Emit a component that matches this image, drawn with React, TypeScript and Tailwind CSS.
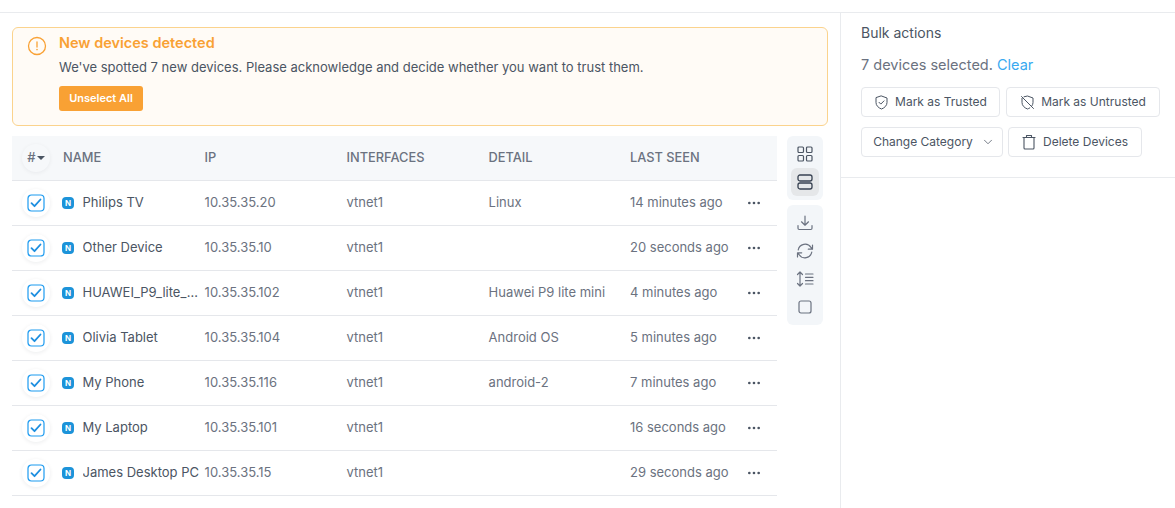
import React from "react";
import { MoreHorizontal, ChevronDown } from "lucide-react";

const rows = [
  ["Philips TV", "10.35.35.20", "vtnet1", "Linux", "14 minutes ago"],
  ["Other Device", "10.35.35.10", "vtnet1", "", "20 seconds ago"],
  ["HUAWEI_P9_lite_mini", "10.35.35.102", "vtnet1", "Huawei P9 lite mini", "4 minutes ago"],
  ["Olivia Tablet", "10.35.35.104", "vtnet1", "Android OS", "5 minutes ago"],
  ["My Phone", "10.35.35.116", "vtnet1", "android-2", "7 minutes ago"],
  ["My Laptop", "10.35.35.101", "vtnet1", "", "16 seconds ago"],
  ["James Desktop PC", "10.35.35.15", "vtnet1", "", "29 seconds ago"],
];

function Row({ r }: { r: string[] }) {
  return (
    <div className="flex h-[45px] items-center border-b border-[#e5e7eb] text-[13px] text-[#6b7280]">
      <div className="flex w-[50px] shrink-0 justify-center pr-[2px]">
        <div className="flex h-[28px] w-[28px] items-center justify-center rounded-full bg-white shadow-[0_1px_4px_rgba(17,24,39,0.08)]">
          <svg width="18" height="18" viewBox="0 0 18 18" fill="none">
            <rect x="1" y="1" width="16" height="16" rx="3.5" stroke="#1d9bf0" strokeWidth="1.2" />
            <path d="M4.5 9.2l3 3 6-6.7" stroke="#1d8fe0" strokeWidth="1.8" strokeLinecap="round" strokeLinejoin="round" />
          </svg>
        </div>
      </div>
      <div className="flex w-[142.6px] shrink-0 items-center">
        <span className="flex h-[12px] w-[12px] shrink-0 items-center justify-center rounded-[4px] bg-[#1c93d9] text-[8px] font-bold leading-none text-white">N</span>
        <span className="ml-[8.5px] min-w-0 flex-1 truncate pr-[5px] text-[#4b5563]">{r[0]}</span>
      </div>
      <div className="w-[142px] shrink-0">{r[1]}</div>
      <div className="w-[142px] shrink-0">{r[2]}</div>
      <div className="w-[141.4px] shrink-0">{r[3]}</div>
      <div className="w-[116px] shrink-0 whitespace-nowrap">{r[4]}</div>
      <MoreHorizontal size={16} className="text-[#4b5563]" />
    </div>
  );
}

function Btn({ children, width }: { children: React.ReactNode; width: string }) {
  return (
    <button className={`flex h-[30px] items-center justify-center rounded-[4px] border border-[#e5e7eb] bg-white text-[12px] text-[#4b5563] ${width}`}>
      {children}
    </button>
  );
}

export default function App() {
  return (
    <div className="h-[508px] w-[1175px] overflow-hidden bg-white pt-[12px] font-['Inter',sans-serif]">
      <div className="flex h-[496px] border-t border-[#e9ebee]">
        <div className="w-[840px] shrink-0 pl-[12px] pt-[14px]">
          <div className="flex h-[99px] w-[816px] rounded-[6px] border border-[#fbd38d] bg-[#fffbf6] pl-[14px] pt-[7px]">
            <svg width="20" height="20" viewBox="0 0 20 20" fill="none" className="mt-[1px] shrink-0">
              <circle cx="10" cy="10" r="8.5" stroke="#f9a134" strokeWidth="1.3" />
              <path d="M10 6v5" stroke="#f9a134" strokeWidth="1.3" strokeLinecap="round" />
              <circle cx="10" cy="13.6" r="0.8" fill="#f9a134" />
            </svg>
            <div className="ml-[12px] flex flex-col items-start">
              <div className="text-[14.5px] font-semibold leading-[16px] text-[#f9a134]">New devices detected</div>
              <div className="mt-[7px] text-[13px] leading-[18px] text-[#4b5563]">We've spotted 7 new devices. Please acknowledge and decide whether you want to trust them.</div>
              <button className="mt-[10px] h-[25px] w-[84px] rounded-[3px] bg-[#f9a134] text-[11px] font-semibold text-white">Unselect All</button>
            </div>
          </div>
          <div className="mt-[10px] flex">
            <div className="w-[765px] shrink-0">
              <div className="flex h-[45px] items-center border-b border-[#e5e7eb] bg-[#f6f8fa] text-[12.8px] font-medium text-[#6b7280]">
                <div className="flex w-[50px] shrink-0 justify-center pr-[2px]">
                  <div className="flex h-[28px] w-[28px] items-center justify-center rounded-full bg-[#f6f8fa] text-[13px] shadow-[0_1px_4px_rgba(17,24,39,0.06)]">
                    <span>#</span>
                    <span className="ml-[1px] h-0 w-0 border-x-[4px] border-t-[4px] border-x-transparent border-t-[#4b5563]" />
                  </div>
                </div>
                <div className="w-[142.6px] shrink-0 pl-[1px]">NAME</div>
                <div className="w-[142px] shrink-0">IP</div>
                <div className="w-[142px] shrink-0">INTERFACES</div>
                <div className="w-[141.4px] shrink-0">DETAIL</div>
                <div>LAST SEEN</div>
              </div>
              {rows.map((r) => (
                <Row key={r[0]} r={r} />
              ))}
            </div>
            <div className="ml-[10px] flex w-[36px] shrink-0 flex-col gap-[5px]">
              <div className="flex h-[64px] flex-col items-center rounded-[6px] bg-[#f3f6f9] pt-[4px]">
                <div className="flex h-[28px] w-[28px] items-center justify-center">
                  <svg width="16" height="16" viewBox="0 0 16 16" fill="none" stroke="#4b5563" strokeWidth="1.2">
                    <rect x="1" y="1" width="5.5" height="5.5" rx="1" />
                    <rect x="9.5" y="1" width="5.5" height="5.5" rx="1" />
                    <rect x="1" y="9.5" width="5.5" height="5.5" rx="1" />
                    <rect x="9.5" y="9.5" width="5.5" height="5.5" rx="1" />
                  </svg>
                </div>
                <div className="flex h-[28px] w-[28px] items-center justify-center rounded-[6px] bg-[#e5e7e9]">
                  <svg width="16" height="16" viewBox="0 0 16 16" fill="none" stroke="#374151" strokeWidth="1.3">
                    <rect x="1" y="1" width="14" height="6" rx="2" />
                    <rect x="1" y="9" width="14" height="6" rx="2" />
                  </svg>
                </div>
              </div>
              <div className="flex h-[120px] flex-col items-center gap-[11px] rounded-[6px] bg-[#f3f6f9] pt-[10px]">
                <svg width="16" height="16" viewBox="0 0 16 16" fill="none" stroke="#6b7280" strokeWidth="1.2" strokeLinecap="round" strokeLinejoin="round">
                  <path d="M8 1v9M4.5 6.8L8 10.2l3.5-3.4M1 10.5v2.8c0 .6.5 1.2 1.2 1.2h11.6c.7 0 1.2-.6 1.2-1.2v-2.8" />
                </svg>
                <svg width="18" height="18" viewBox="0 0 18 18" fill="none" stroke="#6b7280" strokeWidth="1.2" strokeLinecap="round" strokeLinejoin="round">
                  <path d="M2.2 8A7 7 0 0 1 15 5.5l1.3 1.6M16.5 3v4.2h-4.2M15.8 10A7 7 0 0 1 3 12.5l-1.3-1.6M1.5 15v-4.2h4.2" />
                </svg>
                <svg width="18" height="16" viewBox="0 0 18 16" fill="none" stroke="#6b7280" strokeWidth="1.2" strokeLinecap="round" strokeLinejoin="round">
                  <path d="M4 1v14M1.5 3.5L4 1l2.5 2.5M1.5 12.5L4 15l2.5-2.5M9.5 3h7.5M9.5 6.3h7.5M9.5 9.7h7.5M9.5 13h7.5" />
                </svg>
                <svg width="14" height="14" viewBox="0 0 14 14" fill="none" stroke="#6b7280" strokeWidth="1.2" className="mt-[2px]">
                  <rect x="1" y="1" width="12" height="12" rx="2" />
                </svg>
              </div>
            </div>
          </div>
        </div>
        <div className="flex-1 border-l border-[#e9ebee]">
          <div className="h-[165px] border-b border-[#e9ebee] pl-[20px] pt-[11px]">
            <div className="text-[14px] leading-[18px] text-[#4b5563]">Bulk actions</div>
            <div className="mt-[14px] text-[14.5px] leading-[18px] text-[#6b7280]">
              7 devices selected. <span className="text-[#38a9f0]">Clear</span>
            </div>
            <div className="mt-[13px] flex gap-[6px]">
              <Btn width="w-[139px]">
                <svg width="15" height="15" viewBox="0 0 15 15" fill="none" stroke="#4b5563" strokeWidth="1" strokeLinejoin="round" strokeLinecap="round" className="mr-[6px]">
                  <path d="M7.5 1L13 3v4.5c0 3-2.3 5.3-5.5 6.5C4.3 12.8 2 10.5 2 7.5V3z" />
                  <path d="M5 7.3l1.8 1.8 3.2-3.2" />
                </svg>
                Mark as Trusted
              </Btn>
              <Btn width="w-[154px]">
                <svg width="15" height="15" viewBox="0 0 15 15" fill="none" stroke="#4b5563" strokeWidth="1" strokeLinejoin="round" strokeLinecap="round" className="mr-[6px]">
                  <path d="M4 1.8L7.5 1 13 3v4.5c0 1.3-.4 2.4-1.1 3.4M9.8 12.9c-.7.4-1.5.8-2.3 1.1C4.3 12.8 2 10.5 2 7.5V3.4" />
                  <path d="M1.5 1.5l12 12" />
                </svg>
                Mark as Untrusted
              </Btn>
            </div>
            <div className="mt-[10px] flex gap-[5px]">
              <Btn width="w-[142px] pl-[4px]">
                Change Category
                <ChevronDown size={14} strokeWidth={1.3} className="ml-[8px]" />
              </Btn>
              <Btn width="w-[134px]">
                <svg width="14" height="16" viewBox="0 0 14 16" fill="none" stroke="#4b5563" strokeWidth="1.1" strokeLinejoin="round" strokeLinecap="round" className="mr-[7px]">
                  <path d="M2 3.5h10V14a1 1 0 0 1-1 1H3a1 1 0 0 1-1-1zM1 3.5h12M4.5 3.5V1.5h5v2" />
                </svg>
                Delete Devices
              </Btn>
            </div>
          </div>
        </div>
      </div>
    </div>
  );
}
